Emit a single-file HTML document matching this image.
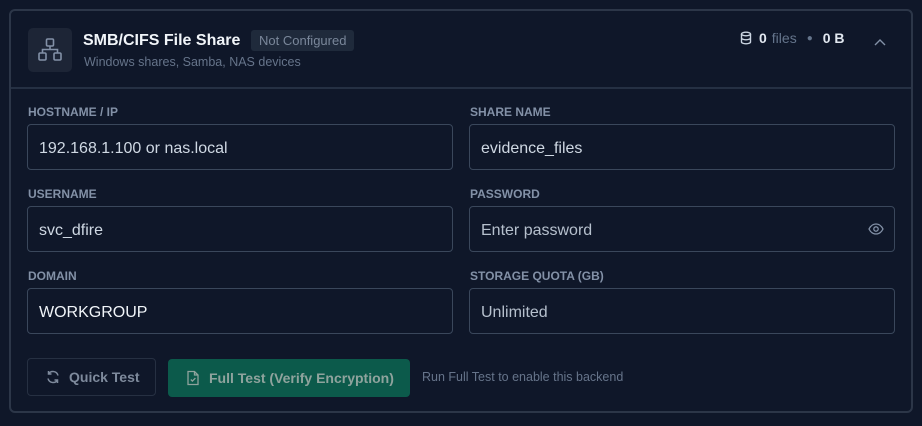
<!DOCTYPE html>
<html><head><style>
*{box-sizing:border-box;margin:0;padding:0}
body{width:922px;height:426px;background:#0f1729;font-family:"Liberation Sans",sans-serif;position:relative;overflow:hidden}
.card{position:absolute;left:9px;top:9px;width:904px;height:404px;border:2px solid #2c3648;border-radius:6px;background:#0f1729}
.hdr{position:absolute;left:0;top:0;right:0;height:78px;border-bottom:2px solid #253043}
.ico{position:absolute;left:17px;top:17px;width:44px;height:44px;border-radius:5px;background:#1d2536}
.title{position:absolute;left:72px;top:21px;color:#f1f5f9;font-weight:bold;font-size:16px}
.badge{position:absolute;left:240px;top:19px;background:#1f2a3b;color:#7a879a;font-size:13px;padding:3px 8px;border-radius:3px}
.sub{position:absolute;left:73px;top:44px;color:#66748a;font-size:12.5px}
.stats{position:absolute;left:727px;top:19px;color:#e2e8f0;font-size:14px;font-weight:bold;display:flex;align-items:center}
.lbl{position:absolute;color:#8391a7;font-size:12px;font-weight:bold}
.in{position:absolute;width:426px;height:46px;border:1px solid #3a475b;border-radius:4px;color:#cfd8e3;font-size:16px;padding:15px 0 0 11px}
.btn{position:absolute;height:38px;border-radius:4px;font-size:14px;font-weight:bold;display:flex;align-items:center}
</style></head><body>
<div class="card">
 <div class="hdr">
  <div class="ico"><svg width="44" height="44" viewBox="0 0 44 44" fill="none" stroke="#8391a7" stroke-width="1.6"><rect x="18.5" y="11" width="7" height="7" rx="1.2"/><rect x="11" y="25" width="7" height="7" rx="1.2"/><rect x="26" y="25" width="7" height="7" rx="1.2"/><path d="M22 18v3.5M14.5 25v-3.5h15V25"/></svg></div>
  <div class="title">SMB/CIFS File Share</div>
  <div class="badge">Not Configured</div>
  <div class="sub">Windows shares, Samba, NAS devices</div>
  <div class="stats" style="left:728px"><svg width="14" height="14" viewBox="0 0 14 14" fill="none" stroke="#cbd5e1" stroke-width="1.4"><ellipse cx="7" cy="3" rx="4.5" ry="1.8"/><path d="M2.5 3v8c0 1 2 1.8 4.5 1.8s4.5-.8 4.5-1.8V3M2.5 7c0 1 2 1.8 4.5 1.8s4.5-.8 4.5-1.8"/></svg><span style="margin-left:6px">0</span><span style="color:#64748b;font-weight:normal;margin-left:5px">files</span><span style="color:#64748b;margin:0 10px;font-size:10px">●</span><span>0 B</span></div>
  <svg style="position:absolute;left:863px;top:27px" width="12" height="10" viewBox="0 0 12 10" fill="none" stroke="#8391a7" stroke-width="1.4"><path d="M1 7l5-5 5 5"/></svg>
 </div>
 <div class="lbl" style="left:17px;top:94px">HOSTNAME / IP</div>
 <div class="lbl" style="left:459px;top:94px">SHARE NAME</div>
 <div class="in" style="left:16px;top:113px">192.168.1.100 or nas.local</div>
 <div class="in" style="left:458px;top:113px">evidence_files</div>
 <div class="lbl" style="left:17px;top:176px">USERNAME</div>
 <div class="lbl" style="left:459px;top:176px">PASSWORD</div>
 <div class="in" style="left:16px;top:195px">svc_dfire</div>
 <div class="in" style="left:458px;top:195px;color:#b6c0cd">Enter password<svg style="position:absolute;right:10px;top:15px" width="16" height="14" viewBox="0 0 16 14" fill="none" stroke="#8391a7" stroke-width="1.3"><path d="M1 7c2-4 4.5-5 7-5s5 1 7 5c-2 4-4.5 5-7 5S3 11 1 7z"/><circle cx="8" cy="7" r="2.2"/></svg></div>
 <div class="lbl" style="left:17px;top:258px">DOMAIN</div>
 <div class="lbl" style="left:459px;top:258px">STORAGE QUOTA (GB)</div>
 <div class="in" style="left:16px;top:277px;color:#f1f5f9">WORKGROUP</div>
 <div class="in" style="left:458px;top:277px;color:#b6c0cd">Unlimited</div>
 <div class="btn" style="left:16px;top:347px;width:129px;border:1px solid #263042;color:#7e8a9c;padding-left:17px"><svg width="16" height="16" viewBox="0 0 16 16" fill="none" stroke="#7e8a9c" stroke-width="1.5"><path d="M13 6.5A5.2 5.2 0 0 0 3.5 5M3 9.5A5.2 5.2 0 0 0 12.5 11M3.5 2v3h3M12.5 14v-3h-3"/></svg><span style="margin-left:8px">Quick Test</span></div>
 <div class="btn" style="left:157px;top:348px;width:242px;background:#0c5a4b;color:#8fa39d;padding-left:18px"><svg width="14" height="16" viewBox="0 0 14 16" fill="none" stroke="#8fa39d" stroke-width="1.3"><path d="M2 1.5h6.5L12 5v9.5H2z M8.5 1.5V5H12"/><path d="M4.8 9.5l1.6 1.6 3-3"/></svg><span style="margin-left:9px">Full Test (Verify Encryption)</span></div>
 <div style="position:absolute;left:411px;top:359px;color:#66748a;font-size:12.5px">Run Full Test to enable this backend</div>
</div>
</body></html>
